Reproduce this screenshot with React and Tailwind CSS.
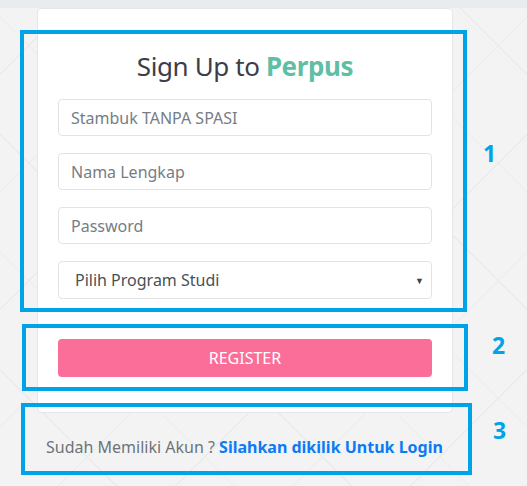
import { useState } from 'react';

const font = { fontFamily: '"Noto Sans", "Open Sans", sans-serif' };

function Field({ placeholder }) {
  return (
    <input
      placeholder={placeholder}
      className="w-full h-[37px] rounded-[4px] border border-[#e3e3e3] bg-white px-3 text-[16px] text-[#495057] placeholder:text-[#757d85] outline-none"
    />
  );
}

export default function App() {
  const [prodi, setProdi] = useState('');

  return (
    <div
      className="relative w-[527px] h-[486px] overflow-hidden bg-[#f3f3f3] bg-[repeating-linear-gradient(45deg,transparent_0,transparent_82px,#ebebeb_82px,#ebebeb_83px),repeating-linear-gradient(-45deg,transparent_0,transparent_82px,#ebebeb_82px,#ebebeb_83px)]"
      style={font}
    >
      <div className="h-2 bg-[#e9ecef]" />

      <div className="ml-[37px] w-[416px] h-[405px] rounded-[5px] border border-[#e6e6e6] bg-white px-5 pt-[42px]">
        <h1 className="text-center text-[26px] leading-[30px] text-[#3d3d4a] tracking-[-0.4px]">
          Sign Up to <span className="font-bold text-[#5fbfa5]">Perpus</span>
        </h1>

        <div className="mt-[18px] flex flex-col gap-[17px]">
          <Field placeholder="Stambuk TANPA SPASI" />
          <Field placeholder="Nama Lengkap" />
          <Field placeholder="Password" />
          <div className="relative">
            <select
              value={prodi}
              onChange={(e) => setProdi(e.target.value)}
              className="w-full h-[38px] appearance-none rounded-[4px] border border-[#e3e3e3] bg-white pl-4 text-[16px] text-[#495057] outline-none"
              style={font}
            >
              <option value="">Pilih Program Studi</option>
            </select>
            <span className="pointer-events-none absolute right-[8px] top-[13px] text-[9px] text-[#444]">▼</span>
          </div>
        </div>

        <button className="mt-[40px] w-full h-[38px] rounded-[4px] bg-[#fc6e9a] text-[16px] text-white">
          REGISTER
        </button>
      </div>

      <p className="mt-[22px] ml-[46px] text-[16px] text-[#6d7379]">
        Sudah Memiliki Akun ? <a className="font-bold text-[#0a7bf5]">Silahkan dikilik Untuk Login</a>
      </p>

      {/* annotation overlays */}
      <div className="absolute left-[20px] top-[30px] w-[447px] h-[282px] border-4 border-[#00a3e8]" />
      <div className="absolute left-[22px] top-[324px] w-[446px] h-[67px] border-4 border-[#00a3e8]" />
      <div className="absolute left-[21px] top-[403px] w-[451px] h-[72px] border-4 border-[#00a3e8]" />
      <span className="absolute left-[483px] top-[136px] text-[23px] font-bold text-[#00a3e8]">1</span>
      <span className="absolute left-[492px] top-[328px] text-[23px] font-bold text-[#00a3e8]">2</span>
      <span className="absolute left-[493px] top-[413px] text-[23px] font-bold text-[#00a3e8]">3</span>
    </div>
  );
}
